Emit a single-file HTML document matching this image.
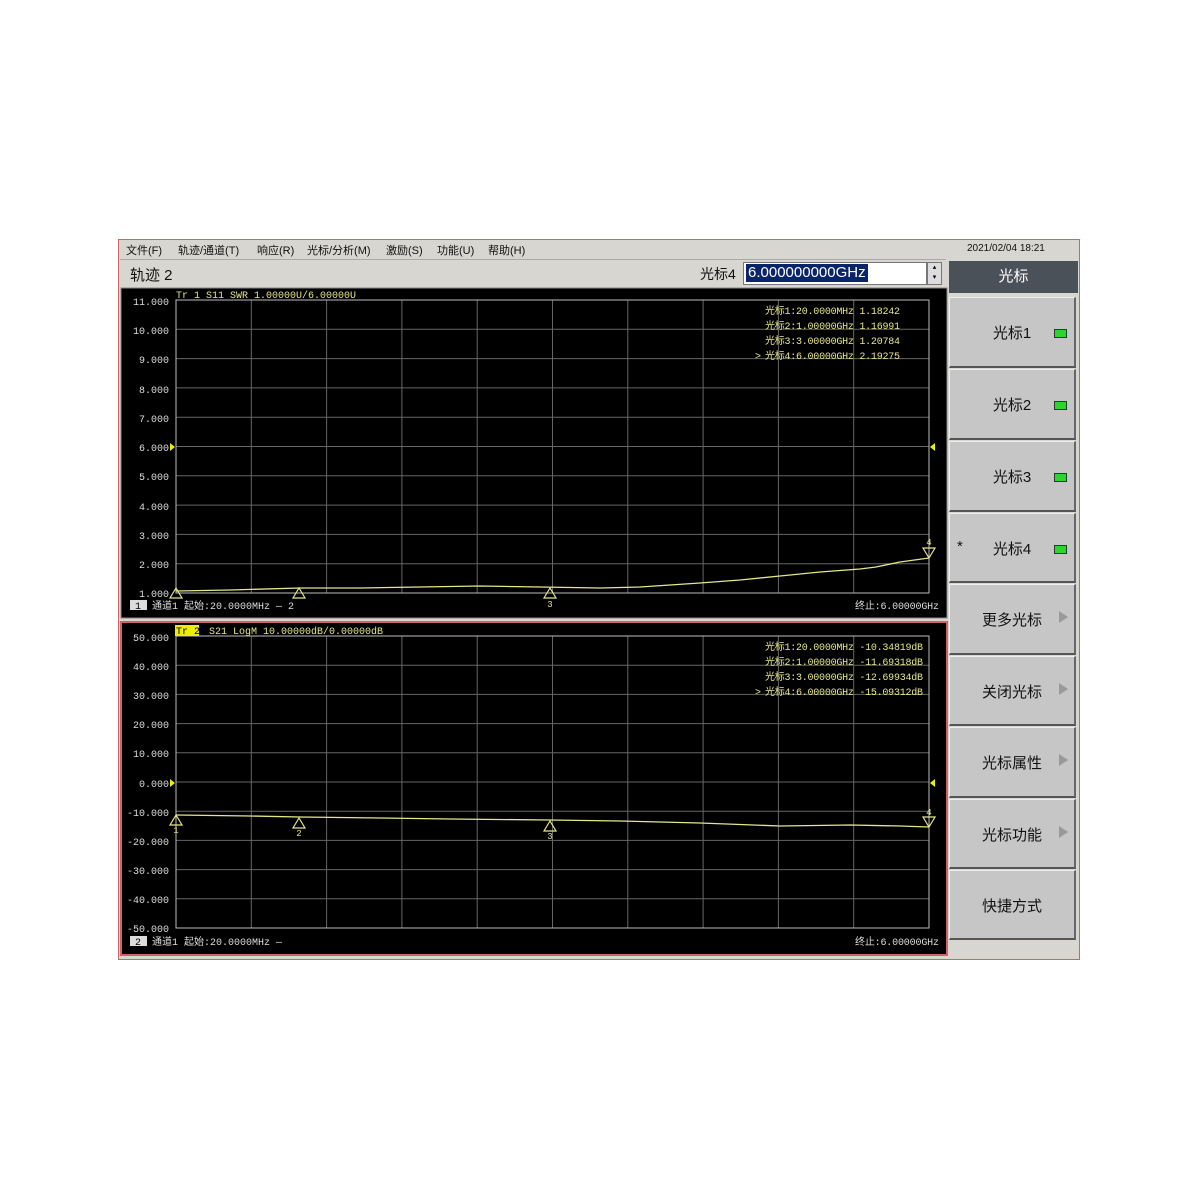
<!DOCTYPE html>
<html><head><meta charset="utf-8"><style>
body{margin:0;width:1200px;height:1200px;background:#fff;position:relative;font-family:"Liberation Sans","Noto Sans CJK SC",sans-serif;overflow:hidden}
.a{position:absolute}
.btn{position:absolute;left:949px;width:127px;background:#c6c6c6;border-top:1px solid #eee;border-left:1px solid #eee;border-right:2px solid #666;border-bottom:2px solid #555;box-sizing:border-box;font-size:15px;color:#111}
.btn span{position:absolute;left:0;right:0;text-align:center;top:24px}
.led{position:absolute;right:7px;top:31px;width:11px;height:7px;background:#2bd62b;border:1px solid #333}
.arr{position:absolute;right:6px;top:26px;width:0;height:0;border-left:9px solid #999;border-top:6px solid transparent;border-bottom:6px solid transparent}
.m{position:absolute;top:242px;font-size:11px;color:#111}
</style></head><body>
<div class="a" style="left:118px;top:239px;width:962px;height:721px;background:#d8d6d0;border:1px solid #c66;box-sizing:border-box"></div>
<div class="m" style="left:126px">文件(F)</div>
<div class="m" style="left:178px">轨迹/通道(T)</div>
<div class="m" style="left:257px">响应(R)</div>
<div class="m" style="left:307px">光标/分析(M)</div>
<div class="m" style="left:386px">激励(S)</div>
<div class="m" style="left:437px">功能(U)</div>
<div class="m" style="left:488px">帮助(H)</div>
<div class="a" style="left:967px;top:243px;font-size:10px;color:#111">2021/02/04 18:21</div>
<div class="a" style="left:120px;top:259px;width:826px;height:28px;background:#d8d6d0;border-top:1px solid #aaa"></div>
<div class="a" style="left:130px;top:264px;font-size:15px;color:#111">轨迹 2</div>
<div class="a" style="left:700px;top:264px;font-size:14px;color:#111">光标4</div>
<div class="a" style="left:743px;top:262px;width:182px;height:21px;background:#fff;border:1px solid #777"></div>
<div class="a" style="left:746px;top:264px;height:18px;background:#0a246a;color:#fff;font-size:15px;padding:0 2px;line-height:18px">6.000000000GHz</div>
<div class="a" style="left:927px;top:262px;width:13px;height:21px;background:#ddd;border:1px solid #777;font-size:7px;text-align:center;line-height:10px">▴<br>▾</div>
<div class="a" style="left:949px;top:261px;width:129px;height:32px;background:#4b5158;color:#fff;font-size:15px;text-align:center;line-height:32px">光标</div>
<div class="btn" style="top:297px;height:71px"><span>光标1</span><div class="led"></div></div>
<div class="btn" style="top:369px;height:71px"><span>光标2</span><div class="led"></div></div>
<div class="btn" style="top:441px;height:71px"><span>光标3</span><div class="led"></div></div>
<div class="btn" style="top:513px;height:70px"><span>光标4</span><div class="led"></div><div style="position:absolute;left:7px;top:24px;font-size:15px">*</div></div>
<div class="btn" style="top:584px;height:71px"><span>更多光标</span><div class="arr"></div></div>
<div class="btn" style="top:656px;height:70px"><span>关闭光标</span><div class="arr"></div></div>
<div class="btn" style="top:727px;height:71px"><span>光标属性</span><div class="arr"></div></div>
<div class="btn" style="top:799px;height:70px"><span>光标功能</span><div class="arr"></div></div>
<div class="btn" style="top:870px;height:70px"><span>快捷方式</span></div>

<svg class="a" style="left:0;top:0" width="1200" height="1200" font-family="Liberation Mono,'Noto Sans CJK SC',monospace">
<rect x="121" y="288" width="826" height="330" fill="#000" stroke="#888"/>
<rect x="121" y="622" width="826" height="333" fill="#000" stroke="#c66" stroke-width="2"/>
<g stroke="#666" stroke-width="1">
<path d="M251.3 300V593M326.6 300V593M401.9 300V593M477.2 300V593M552.5 300V593M627.8 300V593M703.1 300V593M778.4 300V593M853.7 300V593
M176 329.3H929M176 358.6H929M176 387.9H929M176 417.2H929M176 446.5H929M176 475.8H929M176 505.1H929M176 534.4H929M176 563.7H929"/>
<path d="M251.3 636V928M326.6 636V928M401.9 636V928M477.2 636V928M552.5 636V928M627.8 636V928M703.1 636V928M778.4 636V928M853.7 636V928
M176 665.2H929M176 694.4H929M176 723.6H929M176 752.8H929M176 782H929M176 811.2H929M176 840.4H929M176 869.6H929M176 898.8H929"/>
</g>
<rect x="176" y="300" width="753" height="293" fill="none" stroke="#bbb"/>
<rect x="176" y="636" width="753" height="292" fill="none" stroke="#bbb"/>
<g font-size="10" fill="#ddd" text-anchor="end">
<text x="169" y="305">11.000</text><text x="169" y="334">10.000</text><text x="169" y="363">9.000</text><text x="169" y="393">8.000</text><text x="169" y="422">7.000</text><text x="169" y="451">6.000</text><text x="169" y="480">5.000</text><text x="169" y="510">4.000</text><text x="169" y="539">3.000</text><text x="169" y="568">2.000</text><text x="169" y="597">1.000</text>
<text x="169" y="641">50.000</text><text x="169" y="670">40.000</text><text x="169" y="699">30.000</text><text x="169" y="728">20.000</text><text x="169" y="757">10.000</text><text x="169" y="787">0.000</text><text x="169" y="816">-10.000</text><text x="169" y="845">-20.000</text><text x="169" y="874">-30.000</text><text x="169" y="903">-40.000</text><text x="169" y="932">-50.000</text>
</g>
<g fill="#ee0"><path d="M170 443l5 4-5 4z M935 443l-5 4 5 4z M170 779l5 4-5 4z M935 779l-5 4 5 4z"/></g>
<rect x="175" y="625" width="24" height="11" fill="#ee0"/>
<g font-size="10" fill="#e6e68a">
<text x="176" y="298">Tr 1  S11 SWR 1.00000U/6.00000U</text>
<text x="176" y="634" fill="#000">Tr 2</text>
<text x="209" y="634">S21 LogM 10.00000dB/0.00000dB</text>
<g textLength="135">
<text x="765" y="314" textLength="135">光标1:20.0000MHz 1.18242</text>
<text x="765" y="329" textLength="135">光标2:1.00000GHz 1.16991</text>
<text x="765" y="344" textLength="135">光标3:3.00000GHz 1.20784</text>
<text x="755" y="359">&gt;</text><text x="765" y="359" textLength="135">光标4:6.00000GHz 2.19275</text>
<text x="765" y="650" textLength="158">光标1:20.0000MHz -10.34819dB</text>
<text x="765" y="665" textLength="158">光标2:1.00000GHz -11.69318dB</text>
<text x="765" y="680" textLength="158">光标3:3.00000GHz -12.69934dB</text>
<text x="755" y="695">&gt;</text><text x="765" y="695" textLength="158">光标4:6.00000GHz -15.09312dB</text>
</g>
</g>
<g font-size="10" fill="#ddd">
<rect x="130" y="600" width="17" height="10" fill="#ddd"/><text x="135" y="609" fill="#000">1</text>
<text x="152" y="609">通道1  起始:20.0000MHz — 2</text>
<text x="855" y="609" textLength="84">终止:6.00000GHz</text>
<rect x="130" y="936" width="17" height="10" fill="#ddd"/><text x="135" y="945" fill="#000">2</text>
<text x="152" y="945">通道1  起始:20.0000MHz —</text>
<text x="855" y="945" textLength="84">终止:6.00000GHz</text>
</g>
<polyline fill="none" stroke="#e6e68a" stroke-width="1.3" points="176,591 230,590 300,588 360,588 420,587 480,586 540,587 600,588 640,587 700,583 740,580 780,576 820,572 860,569 876,567 900,562 929,558"/>
<polyline fill="none" stroke="#e6e68a" stroke-width="1.3" points="176,815 250,816 300,817 380,818 450,819 550,820 620,821 700,823 780,826 850,825 900,826 929,827"/>
<g fill="none" stroke="#e6e68a" stroke-width="1.2">
<path d="M176 588l-6 10h12z M299 588l-6 10h12z M550 588l-6 10h12z M929 558l-6-10h12z"/>
<path d="M176 815l-6 10h12z M299 818l-6 10h12z M550 821l-6 10h12z M929 827l-6-10h12z"/>
</g>
<g font-size="9" fill="#e6e68a" text-anchor="middle">
<text x="550" y="607">3</text><text x="929" y="545">4</text>
<text x="176" y="833">1</text><text x="299" y="836">2</text><text x="550" y="839">3</text><text x="929" y="815">4</text>
</g>
</svg>
</body></html>
